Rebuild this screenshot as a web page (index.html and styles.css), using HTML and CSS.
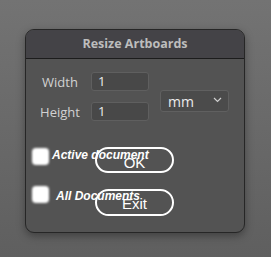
FILE: index.html
```html
<!DOCTYPE html>
<html lang="en">
<head>
    <meta charset="UTF-8">
    <meta name="viewport" content="width=device-width, initial-scale=1.0">
    <title>Resize Artboards</title>
    <link rel="stylesheet" href="styles.css">
</head>
<body>
    <div class="dialog">
        <div class="title">Resize Artboards</div>
        <div class="content">
            <div class="fields">
                <div class="grid">
                    <span class="label">Width</span>
                    <div class="input">1</div>
                    <span class="label">Height</span>
                    <div class="input">1</div>
                </div>
                <div class="select">
                    <span>mm</span>
                    <svg width="9" height="6" viewBox="0 0 9 6"><path d="M1 1 L4.5 4.5 L8 1" fill="none" stroke="#cfcfcf" stroke-width="1.2"/></svg>
                </div>
            </div>
            <div class="option" id="active">
                <div class="check">
                    <span class="box"></span>
                    <span class="check-txt">Active document</span>
                </div>
                <button class="btn" id="ok">OK</button>
            </div>
            <div class="option" id="all">
                <div class="check">
                    <span class="box"></span>
                    <span class="check-txt">All Documents</span>
                </div>
                <button class="btn" id="exit">Exit</button>
            </div>
        </div>
    </div>
</body>
</html>
```

FILE: styles.css
```css
body {
	margin: 0;
	padding: 29px 0 0 25px;
	height: 257px;
	box-sizing: border-box;
	background: linear-gradient(#737373, #5f5f5f);
	font-family: "Open Sans", sans-serif;
}

.dialog {
	width: 220px;
	height: 204px;
	box-sizing: border-box;
	border: 1px solid #262626;
	border-radius: 9px;
	background-color: #535353;
	box-shadow: 0 3px 8px rgba(0, 0, 0, 0.35);
	overflow: hidden;
}

.title {
	height: 29px;
	box-sizing: border-box;
	background-color: #444347;
	border-bottom: 1px solid #1c1c1c;
	color: #bdbdbd;
	font-weight: 700;
	font-size: 12.5px;
	line-height: 28px;
	text-align: center;
}

.content {
	padding-top: 13px;
}

.fields {
	display: flex;
	align-items: flex-start;
}

.grid {
	display: grid;
	grid-template-columns: 48px 58px;
	column-gap: 7px;
	row-gap: 11px;
	margin-left: 10px;
	align-items: center;
}

.label {
	text-align: center;
	color: #d2d2d2;
	font-size: 13px;
}

.input {
	height: 19px;
	box-sizing: border-box;
	background-color: #484848;
	border: 1px solid #5f5f5f;
	border-radius: 3px;
	padding-left: 6px;
	color: #ececec;
	font-size: 13px;
	line-height: 17px;
}

.select {
	display: flex;
	align-items: center;
	justify-content: space-between;
	width: 69px;
	height: 22px;
	box-sizing: border-box;
	margin: 18px 0 0 11px;
	padding: 0 6px 0 7px;
	background-color: #4b4b4b;
	border: 1px solid #606060;
	border-radius: 3px;
	color: #ececec;
	font-size: 14px;
}

.select svg {
	margin-bottom: 2px;
}

.option {
	display: grid;
	grid-template-areas: "stack";
	align-items: start;
}

.option > * {
	grid-area: stack;
}

#active {
	margin-top: 26px;
}

#all {
	margin-top: 12px;
}

.check {
	display: flex;
	align-items: center;
	margin-left: 6px;
	position: relative;
	z-index: 1;
}

.box {
	width: 17px;
	height: 17px;
	border-radius: 4px;
	background-color: #fff;
	filter: blur(1px);
}

.check-txt {
	margin-left: 3px;
	color: #fff;
	font-family: "Liberation Sans", Arial, sans-serif;
	font-weight: 700;
	font-style: italic;
	font-size: 12px;
}

#active .box {
	margin-top: 1px;
}

#active .check-txt {
	margin-top: -2px;
}

#all .check-txt {
	margin-left: 7px;
	margin-top: 4px;
}

.btn {
	width: 79px;
	height: 26px;
	margin-left: 69px;
	padding: 5px 0 0;
	background: transparent;
	border: 2px solid #fff;
	border-radius: 14px;
	color: #fff;
	font-family: "Liberation Sans", Arial, sans-serif;
	font-size: 15px;
	line-height: 18px;
}

#exit {
	margin-top: 4px;
	height: 27px;
	padding-top: 3px;
}
```
